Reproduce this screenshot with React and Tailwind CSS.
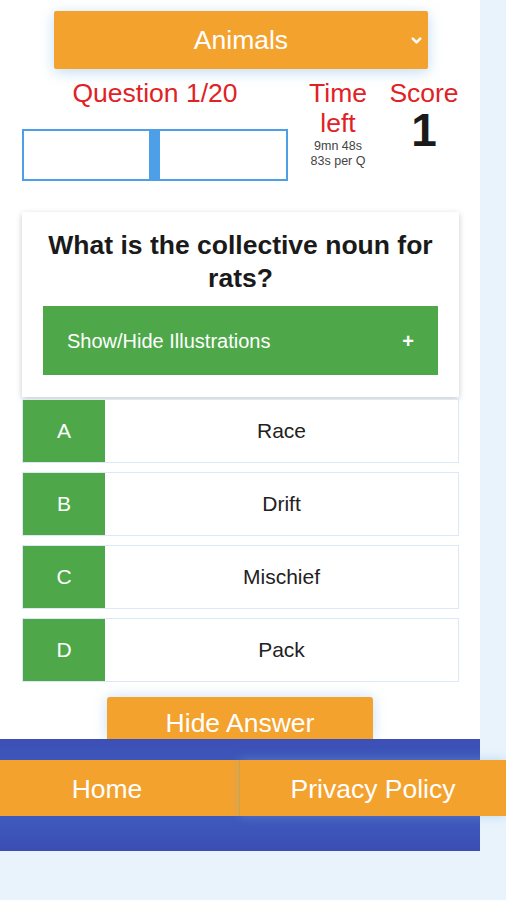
import React from 'react';
import { ChevronDown } from 'lucide-react';

const OPTIONS = [
  { letter: 'A', text: 'Race' },
  { letter: 'B', text: 'Drift' },
  { letter: 'C', text: 'Mischief' },
  { letter: 'D', text: 'Pack' },
];

export default function App() {
  return (
    <div
      className="min-h-[900px] w-[506px] bg-[#e9f3fc] overflow-hidden"
      style={{ fontFamily: '"Liberation Sans", Arial, sans-serif' }}
    >
      {/* Main white column */}
      <div className="w-[480px] bg-white pt-[11px]">
        {/* Category select */}
        <div className="ml-[54px] w-[374px] h-[58px] bg-[#f4a22e] rounded-[2px] shadow-[0_3px_14px_rgba(120,175,225,0.45)] flex items-center relative">
          <span className="flex-1 text-center text-white text-[26.5px] leading-none">Animals</span>
          <ChevronDown className="absolute right-[4px] top-[22px] text-white" size={15} strokeWidth={4} />
        </div>

        {/* Stats row */}
        <div className="flex mt-[9px]">
          <div className="ml-[22px] w-[266px] flex flex-col items-center">
            <div className="text-[#e02226] text-[26.5px] leading-[30px] whitespace-nowrap">Question 1/20</div>
            <div className="mt-[21px] w-[266px] h-[52px] border-2 border-[#4d9fe8] flex">
              <div className="w-[125px]" />
              <div className="w-[11px] bg-[#4d9fe8]" />
              <div className="flex-1" />
            </div>
          </div>
          <div className="ml-[15px] w-[70px] flex flex-col items-center">
            <div className="text-[#e02226] text-[26.5px] leading-[30px]">Time</div>
            <div className="text-[#e02226] text-[26.5px] leading-[30px]">left</div>
            <div className="text-[#444] text-[12.5px] leading-[15px] mt-px whitespace-nowrap">9mn 48s</div>
            <div className="text-[#444] text-[12.5px] leading-[15px] whitespace-nowrap">83s per Q</div>
          </div>
          <div className="ml-[12px] w-[78px] flex flex-col items-center">
            <div className="text-[#e02226] text-[26.5px] leading-[30px]">Score</div>
            <div className="text-[#1a1a1a] text-[46px] font-bold leading-[44px]">1</div>
          </div>
        </div>

        {/* Question card */}
        <div className="mt-[31px] ml-[22px] w-[437px] bg-white shadow-[0_2px_6px_rgba(0,0,0,0.22)] px-[21px] pt-[17px] pb-[22px]">
          <h2 className="text-center text-[26.5px] leading-[33px] font-bold text-[#1a1a1a]">
            What is the collective noun for rats?
          </h2>
          <div className="mt-[11px] h-[69px] bg-[#4ea84a] flex items-center justify-between pl-[24px] pr-[24px] text-white">
            <span className="text-[20px]">Show/Hide Illustrations</span>
            <span className="text-[20px] font-bold leading-none">+</span>
          </div>
        </div>

        {/* Answers */}
        <div className="mt-[2px] ml-[22px] w-[437px] flex flex-col gap-[9px]">
          {OPTIONS.map(opt => (
            <div key={opt.letter} className="h-[64px] flex border border-[#dbe8f7] bg-white">
              <div className="w-[82px] bg-[#4ea84a] flex items-center justify-center text-white text-[21px]">
                {opt.letter}
              </div>
              <div className="flex-1 flex items-center justify-center text-[21px] text-[#222]">
                {opt.text}
              </div>
            </div>
          ))}
        </div>

        {/* Hide answer */}
        <div className="mt-[15px] ml-[107px] w-[266px] h-[42px] bg-[#f4a22e] rounded-t-[3px] shadow-[0_0_14px_rgba(120,175,225,0.4)] flex justify-center pt-[14px]">
          <span className="text-white text-[26.5px] leading-[25px]">Hide Answer</span>
        </div>
      </div>

      {/* Footer */}
      <div className="w-[480px] h-[112px] bg-gradient-to-b from-[#3c4fb5] via-[#4163c2] to-[#3b4db3] pt-[21px]">
        <div className="flex w-[506px] h-[56px]">
          <div className="w-[239px] bg-[#f4a22e] flex items-center justify-center pr-[25px] pt-[3px] text-white text-[26.5px]">
            Home
          </div>
          <div className="w-px bg-[#d8a32c]" />
          <div className="flex-1 bg-[#f4a22e] flex items-center justify-center pt-[3px] text-white text-[26.5px] shadow-[0_0_10px_rgba(120,175,225,0.4)]">
            Privacy Policy
          </div>
        </div>
      </div>
    </div>
  );
}
